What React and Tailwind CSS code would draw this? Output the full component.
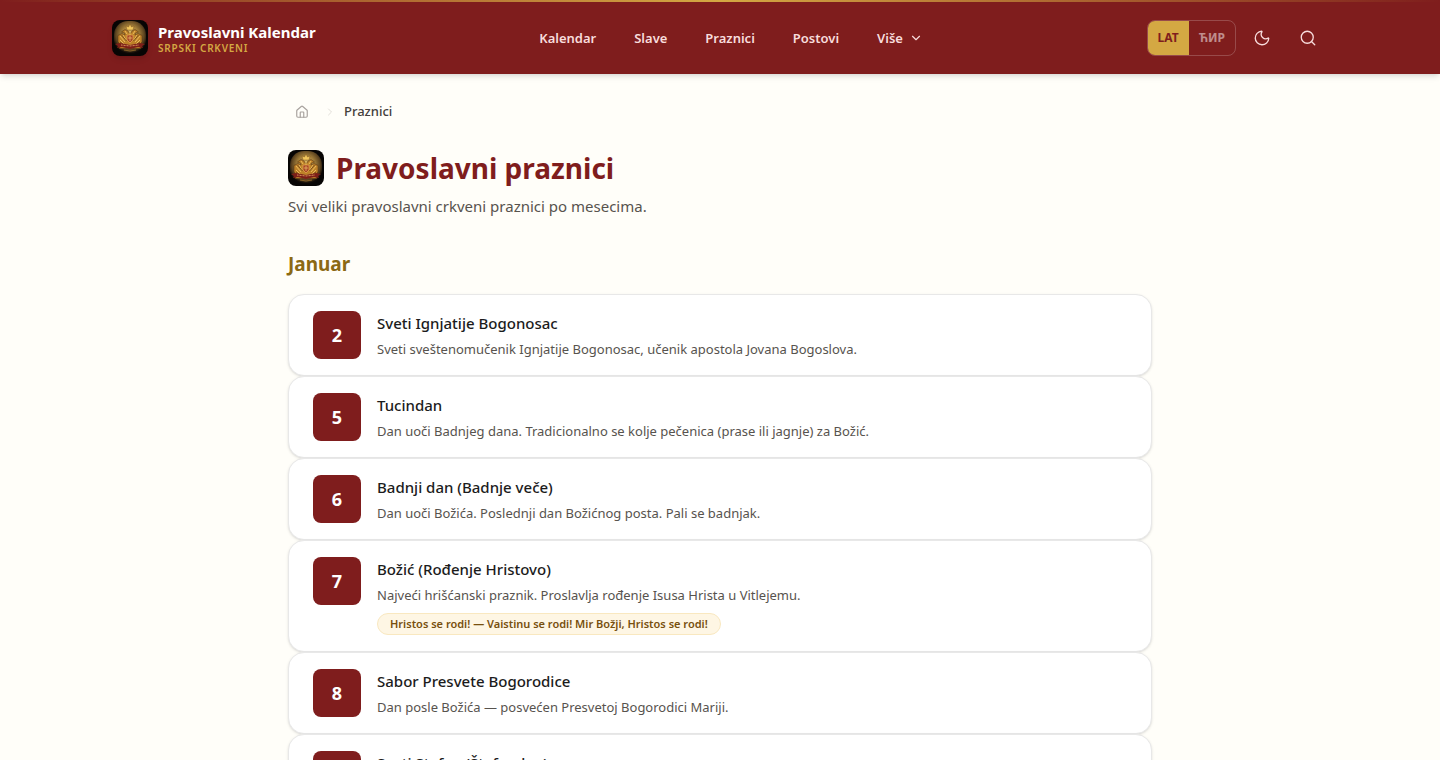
import React, { useState } from 'react';
import { ChevronDown, ChevronRight, House, Moon, Search } from 'lucide-react';

const navLinks = ['Kalendar', 'Slave', 'Praznici', 'Postovi'];

const januar = [
  { day: 2, title: 'Sveti Ignjatije Bogonosac', text: 'Sveti sveštenomučenik Ignjatije Bogonosac, učenik apostola Jovana Bogoslova.' },
  { day: 5, title: 'Tucindan', text: 'Dan uoči Badnjeg dana. Tradicionalno se kolje pečenica (prase ili jagnje) za Božić.' },
  { day: 6, title: 'Badnji dan (Badnje veče)', text: 'Dan uoči Božića. Poslednji dan Božićnog posta. Pali se badnjak.' },
  {
    day: 7,
    title: 'Božić (Rođenje Hristovo)',
    text: 'Najveći hrišćanski praznik. Proslavlja rođenje Isusa Hrista u Vitlejemu.',
    greeting: 'Hristos se rodi! — Vaistinu se rodi! Mir Božji, Hristos se rodi!',
  },
  { day: 8, title: 'Sabor Presvete Bogorodice', text: 'Dan posle Božića — posvećen Presvetoj Bogorodici Mariji.' },
  { day: 9, title: 'Sveti Stefan (Štefandan)', text: 'Sveti prvomučenik i arhiđakon Stefan.' },
];

// dvoglavi orao sa krunom i trakom
function Emblem({ id, className }) {
  return (
    <svg viewBox="0 0 36 36" className={className} aria-hidden="true">
      <defs>
        <radialGradient id={id} cx="50%" cy="42%" r="56%">
          <stop offset="0" stopColor="#e0bd68" />
          <stop offset="0.5" stopColor="#a07c38" />
          <stop offset="0.8" stopColor="#5c431f" />
          <stop offset="1" stopColor="#0b0705" />
        </radialGradient>
      </defs>
      <rect width="36" height="36" fill="#070504" />
      <rect x="2" y="1" width="32" height="33" rx="14" fill={`url(#${id})`} />
      <path d="M15 10l-1-4 2.500 1L18 4l1.500 3L22 6l-1 4z" fill="#f0c65c" stroke="#6e4617" strokeWidth="0.4" />
      <path d="M17 13l-1-2-3-1.500-3.500 2.500 3 1 .5 2-3-1.500-4 2v6l2 4-1 3h6l3-1 2 1 2-1 3 1h6l-1-3 2-4v-6l-4-2-3 1.500.5-2 3-1-3.500-2.500-3 1.500-1 2z" fill="#bd8128" stroke="#4f2d10" strokeWidth="0.5" />
      <path d="M8 16l5 6M8 20l4 4M11 15l3 5M28 16l-5 6M28 20l-4 4M25 15l-3 5M18 11v4M13 11l2 3M23 11l-2 3" fill="none" stroke="#f5cb6b" strokeWidth="0.8" />
      <path d="M9.500 15l5 6M26.500 15l-5 6M8 22l4 3M28 22l-4 3" fill="none" stroke="#5e3512" strokeWidth="0.7" />
      <path d="M15 15h6v5l-3 3-3-3z" fill="#a84526" stroke="#efb75a" strokeWidth="0.6" />
      <path d="M18 16v5M16 18h4" stroke="#efc36e" strokeWidth="0.7" />
      <path d="M3 24l5-1 10 2 10-2 5 1-3 2 1 2-5-1-8 2-8-2-5 1 1-2z" fill="#7d1e18" />
      <path d="M9 25l9 1 9-1" fill="none" stroke="#d6955b" strokeWidth="1" strokeDasharray="1 .5" />
      <path d="M12 30l6 1 6-1" fill="none" stroke="#876027" strokeWidth="1" />
    </svg>
  );
}

function Header() {
  const [script, setScript] = useState('lat');

  return (
    <header className="bg-[#7f1d1d] shadow-md">
      <div className="h-0.5 bg-linear-to-r from-[#7f1d1d] via-[#d4a843] to-[#7f1d1d]" />
      <div className="mx-auto flex h-18 max-w-7xl items-center justify-between px-8">
        <a href="#pocetna" className="flex items-center gap-2.5">
          <Emblem id="logo-header" className="size-9 rounded-lg shadow-md" />
          <span className="flex flex-col">
            <span className="text-[15px] leading-5 font-bold text-white">Pravoslavni Kalendar</span>
            <span className="text-[10px] leading-3 font-semibold tracking-[0.08em] text-[#d4a843] uppercase">Srpski crkveni</span>
          </span>
        </a>

        <nav className="flex items-center gap-1.5">
          {navLinks.map((link) => (
            <a key={link} href={`#${link.toLowerCase()}`} className="px-4 py-2 text-[13px] leading-5 font-semibold text-[#f8dcdc]">
              {link}
            </a>
          ))}
          <button type="button" className="flex items-center gap-1.5 px-4 py-2 text-[13px] leading-5 font-semibold text-[#f8dcdc]">
            Više
            <ChevronDown size={14} />
          </button>
        </nav>

        <div className="flex items-center gap-1.5">
          <div className="flex h-9 overflow-hidden rounded-lg border border-white/20 text-xs font-bold">
            <button
              type="button"
              onClick={() => setScript('lat')}
              className={script === 'lat' ? 'bg-[#d4a843] px-2.5 text-[#7f1d1d]' : 'px-2.5 text-white/50'}
            >
              LAT
            </button>
            <button
              type="button"
              onClick={() => setScript('cir')}
              className={script === 'cir' ? 'bg-[#d4a843] px-2.5 text-[#7f1d1d]' : 'px-2.5 text-white/50'}
            >
              ЋИР
            </button>
          </div>
          <button type="button" aria-label="Tamna tema" className="flex size-10 items-center justify-center text-[#f8dcdc]">
            <Moon size={18} strokeWidth={1.75} />
          </button>
          <button type="button" aria-label="Pretraga" className="flex size-10 items-center justify-center text-[#f8dcdc]">
            <Search size={18} strokeWidth={1.75} />
          </button>
        </div>
      </div>
    </header>
  );
}

function HolidayCard({ day, title, text, greeting }) {
  return (
    <a href={`#januar-${day}`} className="flex items-start gap-4 rounded-2xl border border-[#e8e8e8] bg-white px-6 py-4 shadow-sm">
      <span className="flex size-12 shrink-0 items-center justify-center rounded-lg bg-[#7f1d1d] text-lg font-bold text-white">{day}</span>
      <div>
        <h3 className="text-[15px] leading-6 font-medium text-[#1c1c1c]">{title}</h3>
        <p className="mt-1 text-[13px] leading-5 text-[#57534e]">{text}</p>
        {greeting && (
          <p className="mt-2 w-fit rounded-full border border-[#f9e8c0] bg-[#fef6e4] px-3 py-0.5 text-[11px] leading-4 font-semibold text-[#78500f]">
            {greeting}
          </p>
        )}
      </div>
    </a>
  );
}

function App() {
  return (
    <div className="min-h-screen bg-[#fffef9] font-['Noto_Sans',sans-serif]">
      <Header />
      <main className="mx-auto max-w-4xl px-4 py-6">
        <nav aria-label="Putanja" className="flex h-7 items-center gap-2 text-[13px]">
          <a href="#pocetna" aria-label="Početna" className="px-[7px] text-[#a8a29e]">
            <House size={14} />
          </a>
          <ChevronRight size={12} className="text-[#e3e0da]" />
          <span className="font-medium text-[#44403c]">Praznici</span>
        </nav>

        <div className="mt-6 flex items-center gap-3">
          <Emblem id="logo-title" className="size-9 rounded-lg" />
          <h1 className="text-[28px] leading-9 font-bold text-[#7f1d1d]">Pravoslavni praznici</h1>
        </div>
        <p className="mt-2 text-[15px] leading-6 text-[#57534e]">Svi veliki pravoslavni crkveni praznici po mesecima.</p>

        <section className="mt-8">
          <h2 className="text-[19px] leading-7 font-bold text-[#8b6914]">Januar</h2>
          <div className="mt-4 flex flex-col">
            {januar.map((holiday) => (
              <HolidayCard key={holiday.day} {...holiday} />
            ))}
          </div>
        </section>
      </main>
    </div>
  );
}

export default App;
